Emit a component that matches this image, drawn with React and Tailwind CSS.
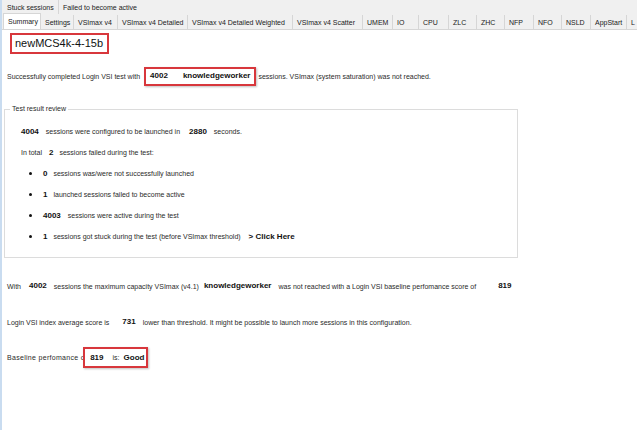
import React from 'react';

const TABS = [
    { label: 'Summary', w: 'w-[38px]', active: true },
    { label: 'Settings', w: 'w-[33px]' },
    { label: 'VSImax v4', w: 'w-[44px]' },
    { label: 'VSImax v4 Detailed', w: 'w-[70px]' },
    { label: 'VSImax v4 Detailed Weighted', w: 'w-[105px]' },
    { label: 'VSImax v4 Scatter', w: 'w-[70px]' },
    { label: 'UMEM', w: 'w-[30px]' },
    { label: 'IO', w: 'w-[26px]' },
    { label: 'CPU', w: 'w-[30px]' },
    { label: 'ZLC', w: 'w-[28px]' },
    { label: 'ZHC', w: 'w-[28px]' },
    { label: 'NFP', w: 'w-[29px]' },
    { label: 'NFO', w: 'w-[28px]' },
    { label: 'NSLD', w: 'w-[29px]' },
    { label: 'AppStart', w: 'w-[36px]' },
    { label: 'L', w: 'w-[40px]' },
];

function B({ children, className = '' }) {
    return <span className={`font-bold text-[8px] text-[#111] ${className}`}>{children}</span>;
}

function Bullet({ children }) {
    return (
        <div className="flex items-center h-[21px] pl-[19px]">
            <span className="w-[3px] h-[3px] rounded-full bg-[#111]"></span>
            {children}
        </div>
    );
}

export default function App() {
    return (
        <div className="w-[637px] h-[430px] bg-white border-l-2 border-[#c9dcf0] overflow-hidden font-['Liberation_Sans',Arial,sans-serif] text-[7px] text-[#2a2a2a] leading-none">
            {/* tab strip */}
            <div className="bg-[#f0f0f0] text-[7px] text-[#222]">
                <div className="flex h-[14px]">
                    <div className="w-[57px] pl-[5px] flex items-center border-r border-[#d6d6d6]">Stuck sessions</div>
                    <div className="pl-[4px] flex items-center">Failed to become active</div>
                </div>
                <div className="flex items-end h-[16px] pl-[1px] border-b border-[#d6d6d6]">
                    {TABS.map(t => (
                        <div
                            key={t.label}
                            className={t.active
                                ? `${t.w} shrink-0 h-[16px] pl-[4px] pb-[4px] flex items-end bg-white border-x border-t border-[#d6d6d6] whitespace-nowrap`
                                : `${t.w} shrink-0 h-[14px] pl-[4px] flex items-center border-r border-[#d6d6d6] whitespace-nowrap`}
                        >
                            {t.label}
                        </div>
                    ))}
                </div>
            </div>

            {/* title */}
            <div className="mt-[3px] ml-[8px] w-[99px] h-[21px] border-2 border-[#d8373c] flex items-center pl-[3px] text-[11px] text-[#111]">
                newMCS4k-4-15b
            </div>

            <div className="mt-[12px] h-[20px] pl-[5px] flex items-center whitespace-nowrap">
                <span>Successfully completed Login VSI test with</span>
                <span className="ml-[4px] h-[19px] border-2 border-[#d8373c] flex items-center pl-[4px] pr-[4px] shadow-[1px_1px_2px_rgba(0,0,0,0.25)]">
                    <B>4002</B>
                    <B className="ml-[15px]">knowledgeworker</B>
                </span>
                <span className="ml-[2px]">sessions. VSImax (system saturation) was not reached.</span>
            </div>

            {/* test result review */}
            <fieldset className="mt-[19px] ml-[2px] w-[514px] border border-[#dcdcdc] pl-[5px] pt-[8px] pb-[10px] whitespace-nowrap">
                <legend className="px-[2px] leading-[8px]">Test result review</legend>
                <div className="flex items-center h-[21px] pl-[11px]">
                    <B>4004</B>
                    <span className="ml-[7px]">sessions were configured to be launched in</span>
                    <B className="ml-[9px]">2880</B>
                    <span className="ml-[7px]">seconds.</span>
                </div>
                <div className="flex items-center h-[21px] pl-[11px]">
                    <span>In total</span>
                    <B className="ml-[7px]">2</B>
                    <span className="ml-[6px]">sessions failed during the test:</span>
                </div>
                <Bullet>
                    <B className="ml-[11px]">0</B>
                    <span className="ml-[6px]">sessions was/were not successfully launched</span>
                </Bullet>
                <Bullet>
                    <B className="ml-[11px]">1</B>
                    <span className="ml-[6px]">launched sessions failed to become active</span>
                </Bullet>
                <Bullet>
                    <B className="ml-[11px]">4003</B>
                    <span className="ml-[7px]">sessions were active during the test</span>
                </Bullet>
                <Bullet>
                    <B className="ml-[11px]">1</B>
                    <span className="ml-[6px]">sessions got stuck during the test (before VSImax threshold)</span>
                    <B className="ml-[8px]">&gt; Click Here</B>
                </Bullet>
            </fieldset>

            <div className="mt-[18px] h-[20px] pl-[5px] flex items-center whitespace-nowrap">
                <span>With</span>
                <B className="ml-[8px]">4002</B>
                <span className="ml-[7px]">sessions the maximum capacity VSImax (v4.1)</span>
                <B className="ml-[5px]">knowledgeworker</B>
                <span className="ml-[7px]">was not reached with a Login VSI baseline perfomance score of</span>
                <B className="ml-[22px]">819</B>
            </div>

            <div className="mt-[16px] h-[20px] pl-[5px] flex items-center whitespace-nowrap">
                <span>Login VSI index average score is</span>
                <B className="ml-[13px]">731</B>
                <span className="ml-[7px]">lower than threshold. It might be possible to launch more sessions in this configuration.</span>
            </div>

            <div className="mt-[15px] h-[21px] pl-[5px] flex items-center whitespace-nowrap">
                <span className="tracking-[0.3px]">Baseline perfomance of</span>
                <span className="ml-[-4px] h-[21px] w-[65px] bg-white border-2 border-[#d8373c] flex items-center pl-[5px] shadow-[1px_1px_2px_rgba(0,0,0,0.25)]">
                    <B>819</B>
                    <span className="ml-[9px]">is:</span>
                    <B className="ml-[4px]">Good</B>
                </span>
            </div>
        </div>
    );
}
